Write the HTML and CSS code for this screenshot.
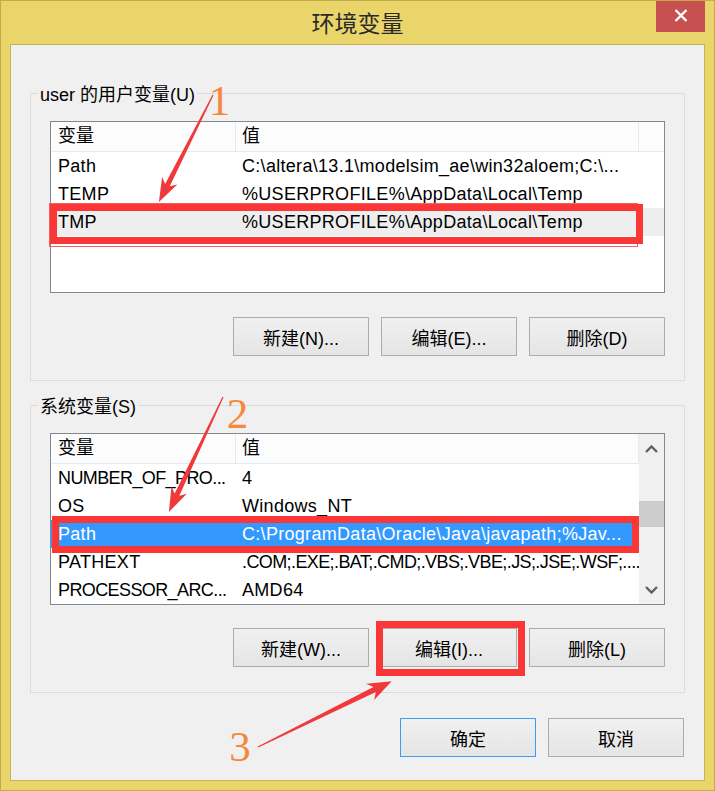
FILE: index.html
```html
<!DOCTYPE html>
<html lang="zh-CN">
<head>
    <meta charset="UTF-8">
    <title>环境变量</title>
    <link rel="stylesheet" href="styles.css">
</head>
<body>
    <div class="screen">
        <div class="window">
            <div class="titlebar">
                <span></span>
                <h1 class="title">环境变量</h1>
                <button class="close-btn" aria-label="关闭">
                    <svg width="14" height="13" viewBox="0 0 14 13"><path d="M1.5 1 L12.5 12 M12.5 1 L1.5 12" stroke="#fff" stroke-width="2.4" fill="none"/></svg>
                </button>
            </div>

            <div class="client">
                <section class="group">
                    <div class="group-title">user 的用户变量(U)</div>
                    <div class="list">
                        <div class="list-head">
                            <span>变量</span><span>值</span><span></span>
                        </div>
                        <div class="row"><span>Path</span><span>C:\altera\13.1\modelsim_ae\win32aloem;C:\...</span></div>
                        <div class="row"><span>TEMP</span><span>%USERPROFILE%\AppData\Local\Temp</span></div>
                        <div class="row row-inactive"><span>TMP</span><span>%USERPROFILE%\AppData\Local\Temp</span></div>
                    </div>
                    <div class="actions">
                        <button class="btn">新建(N)...</button>
                        <button class="btn">编辑(E)...</button>
                        <button class="btn">删除(D)</button>
                    </div>
                </section>

                <section class="group group-system">
                    <div class="group-title">系统变量(S)</div>
                    <div class="list list-scroll">
                        <div class="list-rows">
                            <div class="list-head">
                                <span>变量</span><span>值</span>
                            </div>
                            <div class="row"><span class="tight">NUMBER_OF_PRO...</span><span>4</span></div>
                            <div class="row"><span>OS</span><span>Windows_NT</span></div>
                            <div class="row row-selected"><span>Path</span><span>C:\ProgramData\Oracle\Java\javapath;%Jav...</span></div>
                            <div class="row"><span>PATHEXT</span><span class="tight">.COM;.EXE;.BAT;.CMD;.VBS;.VBE;.JS;.JSE;.WSF;....</span></div>
                            <div class="row"><span class="tight">PROCESSOR_ARC...</span><span>AMD64</span></div>
                        </div>
                        <div class="scrollbar">
                            <div class="sb-btn">
                                <svg width="13" height="8" viewBox="0 0 13 8"><polyline points="1,7 6.5,1.5 12,7" fill="none" stroke="#606060" stroke-width="2.4"/></svg>
                            </div>
                            <div class="sb-thumb"></div>
                            <div class="sb-btn sb-down">
                                <svg width="13" height="8" viewBox="0 0 13 8"><polyline points="1,1 6.5,6.5 12,1" fill="none" stroke="#606060" stroke-width="2.4"/></svg>
                            </div>
                        </div>
                    </div>
                    <div class="actions">
                        <button class="btn">新建(W)...</button>
                        <button class="btn">编辑(I)...</button>
                        <button class="btn">删除(L)</button>
                    </div>
                </section>

                <div class="dialog-actions">
                    <button class="btn btn-default">确定</button>
                    <button class="btn">取消</button>
                </div>
            </div>
        </div>

        <!-- annotations drawn on top of the screenshot -->
        <div class="mark mark-tmp-edge"></div>
        <div class="mark mark-tmp"></div>
        <div class="mark mark-path"></div>
        <div class="mark mark-edit"></div>

        <svg class="annotations" width="715" height="791" viewBox="0 0 715 791">
            <g fill="#f0393a">
                <path transform="translate(213 95) rotate(116.8)" d="M0,-0.6 L101,-2.6 L96,-8.5 L120,0 L96,8.5 L101,2.6 L0,0.6 Z"/>
                <path transform="translate(223 397) rotate(115.2)" d="M0,-0.6 L108,-2.6 L103,-8.5 L127,0 L103,8.5 L108,2.6 L0,0.6 Z"/>
                <path transform="translate(258 747) rotate(-26.2)" d="M0,-0.6 L130,-2.8 L125,-9 L149,0 L125,9 L130,2.8 L0,0.6 Z"/>
            </g>
            <text class="num" x="219.5" y="115">1</text>
            <text class="num" x="237.5" y="428">2</text>
            <text class="num" x="240" y="761">3</text>
        </svg>
    </div>
</body>
</html>
```

FILE: styles.css
```css
* {
    box-sizing: border-box;
}

body {
    margin: 0;
    font-family: "Liberation Sans", "Noto Sans CJK SC", sans-serif;
    font-size: 18px;
    color: #000;
}

.screen {
    position: relative;
    width: 715px;
    height: 791px;
}

.window {
    width: 100%;
    height: 100%;
    display: flex;
    flex-direction: column;
    background-color: #ead56b;
    border: 1px solid #c4aa4c;
    padding: 0 9px 9px;
}

.titlebar {
    height: 43px;
    display: grid;
    grid-template-columns: 1fr auto 1fr;
}

.title {
    margin: 0;
    font-family: "Noto Sans CJK SC", sans-serif;
    font-size: 23px;
    font-weight: normal;
    color: #2a2a2a;
    line-height: 43px;
}

.close-btn {
    justify-self: end;
    width: 49px;
    height: 31px;
    border: none;
    padding: 0 0 2px;
    background-color: #c75050;
    display: flex;
    align-items: center;
    justify-content: center;
}

.client {
    flex: 1;
    display: flex;
    flex-direction: column;
    background-color: #f0f0f0;
    border: 1px solid #c8b35a;
    padding: 0 19px;
}

.group {
    border: 1px solid #dcdcdc;
    margin-top: 48px;
    padding: 0 19px 24px;
}

.group-system {
    margin-top: 24px;
    padding-bottom: 25px;
}

.group-title {
    display: table;
    margin: -10px 0 0 -12px;
    padding: 0 2px;
    line-height: 22px;
    background-color: #f0f0f0;
}

.list {
    margin-top: 15px;
    height: 172px;
    border: 1px solid #828790;
    background-color: #fff;
}

.list-scroll {
    display: flex;
}

.list-rows {
    flex: 1;
}

.list-head,
.row {
    display: grid;
    grid-template-columns: 185px 403px 1fr;
}

.list-scroll .list-head,
.list-scroll .row {
    grid-template-columns: 185px 1fr;
}

.list-head span {
    height: 30px;
    line-height: 29px;
    background-color: #fcfcfc;
    border-bottom: 1px solid #e2eaf3;
    border-right: 1px solid #e2eaf3;
    padding-left: 7px;
}

.list-head span:nth-child(2) {
    padding-left: 6px;
}

.list-head span:nth-child(3) {
    border-right: none;
}

.row span {
    height: 28px;
    line-height: 28px;
    padding-left: 7px;
    white-space: nowrap;
    overflow: hidden;
    letter-spacing: 0.3px;
}

.row span:nth-child(2) {
    padding-left: 6px;
}

.row span.tight {
    letter-spacing: -0.6px;
}

.row-inactive {
    background-color: #eeeeee;
}

.row-selected {
    background-color: #3399ff;
    color: #fff;
}

.scrollbar {
    width: 25px;
    display: flex;
    flex-direction: column;
    background-color: #f0f0f0;
}

.sb-btn {
    height: 30px;
    display: flex;
    align-items: center;
    justify-content: center;
}

.sb-thumb {
    margin-top: 37px;
    height: 26px;
    background-color: #cdcdcd;
}

.sb-down {
    margin-top: auto;
    height: 28px;
}

.actions {
    display: flex;
    justify-content: flex-end;
    gap: 12px;
    margin-top: 24px;
}

.group-system .actions {
    margin-top: 23px;
}

.btn {
    width: 136px;
    height: 39px;
    padding: 0;
    border: 1px solid #acacac;
    background: linear-gradient(#f0f0f0, #e5e5e5);
    font-family: inherit;
    font-size: 18px;
    color: #000;
}

.btn-default {
    border-color: #3d9bf3;
}

.dialog-actions {
    display: flex;
    justify-content: flex-end;
    gap: 12px;
    margin-top: 25px;
    padding-right: 1px;
}

.mark {
    position: absolute;
    border: 7px solid #fa3737;
}

.mark-tmp-edge {
    left: 49px;
    top: 203px;
    width: 589px;
    height: 44px;
    border-width: 1px;
    border-color: #f76060;
}

.mark-tmp {
    left: 50px;
    top: 204px;
    width: 593px;
    height: 40px;
}

.mark-path {
    left: 52px;
    top: 516px;
    width: 587px;
    height: 37px;
}

.mark-edit {
    left: 376px;
    top: 621px;
    width: 149px;
    height: 55px;
}

.annotations {
    position: absolute;
    left: 0;
    top: 0;
    pointer-events: none;
}

.num {
    font-family: "Liberation Serif", serif;
    font-size: 43px;
    fill: #f5883c;
    text-anchor: middle;
}
```
